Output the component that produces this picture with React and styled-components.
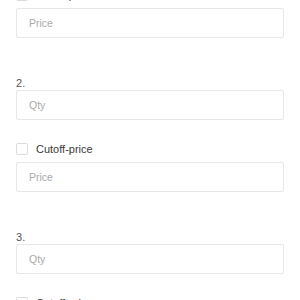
import React from "react";
import styled, { createGlobalStyle } from "styled-components";

const Global = createGlobalStyle`
  html, body { margin: 0; padding: 0; background: #fff; overflow: hidden; }
  body { font-family: "Liberation Sans", Arial, sans-serif; }
  * { box-sizing: border-box; }
`;

const List = styled.div`
  display: flex;
  flex-direction: column;
  padding: 0 16px;
  margin-top: -78px;
`;

const Item = styled.div`
  display: flex;
  flex-direction: column;
  margin-bottom: 38px;
`;

const Index = styled.div`
  height: 14px;
  line-height: 14px;
  font-size: 11px;
  color: #555;
`;

const Field = styled.input`
  display: block;
  width: 100%;
  height: 30px;
  border: 1px solid #e6e6e6;
  border-radius: 2px;
  padding: 0 12px;
  font-family: inherit;
  font-size: 10.5px;
  color: #333;
  background: #fff;
  outline: none;
  &::placeholder { color: #aaa; }
`;

const CheckRow = styled.label`
  display: flex;
  align-items: center;
  gap: 8px;
  height: 16px;
  margin: 21px 0 5px;
  font-size: 11px;
  color: #3a3a3a;
`;

const Box = styled.span`
  width: 12px;
  height: 12px;
  border: 1px solid #dcdcdc;
  border-radius: 2px;
  background: #fff;
`;

export default function App() {
  const items = [1, 2, 3];
  return (
    <>
      <Global />
      <List>
        {items.map((n) => (
          <Item key={n}>
            <Index>{n}.</Index>
            <Field placeholder="Qty" />
            <CheckRow>
              <Box />
              Cutoff-price
            </CheckRow>
            <Field placeholder="Price" />
          </Item>
        ))}
      </List>
    </>
  );
}
